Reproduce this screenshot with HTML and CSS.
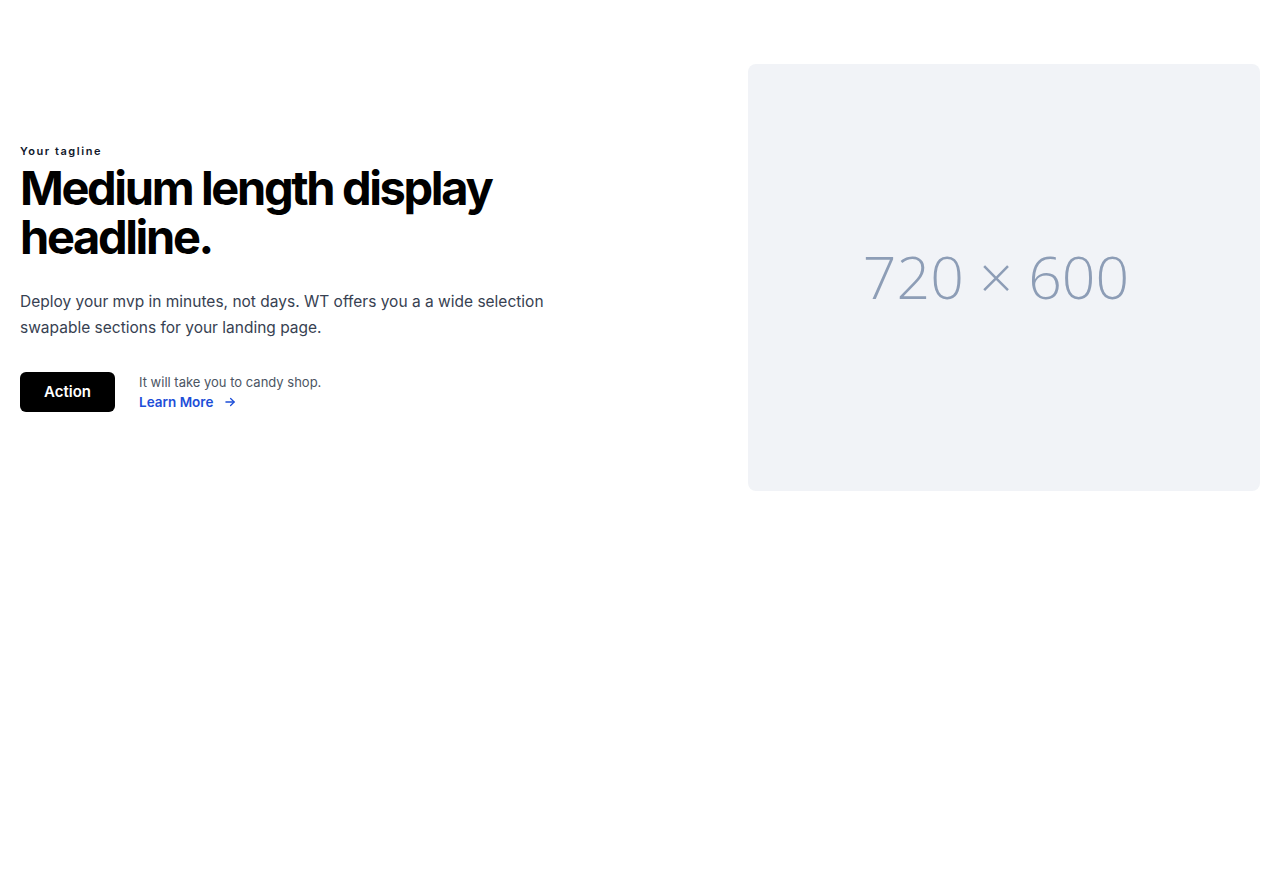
FILE: index.html
```html
<!DOCTYPE html>
<html lang="en">
<head>
<meta charset="utf-8">
<title>Hero</title>
<link rel="stylesheet" href="styles.css">
</head>
<body>
<section class="hero">
  <div class="copy">
    <p class="tagline">Your tagline</p>
    <h1 class="headline">Medium length display headline.</h1>
    <p class="lead">Deploy your mvp in minutes, not days. WT offers you a a wide selection swapable sections for your landing page.</p>
    <div class="actions">
      <a class="btn" href="#">Action</a>
      <div class="note">
        <span class="note-text">It will take you to candy shop.</span>
        <a class="learn" href="#">Learn More
          <svg class="arrow" width="14" height="14" viewBox="0 0 24 24" fill="none" stroke="currentColor" stroke-width="2.2" stroke-linecap="round" stroke-linejoin="round"><path d="M5 12h14"/><path d="M13 6l6 6-6 6"/></svg>
        </a>
      </div>
    </div>
  </div>
  <div class="media">
    <span class="media-label">720 × 600</span>
  </div>
</section>
</body>
</html>
```
FILE: styles.css
```css
* { box-sizing: border-box; }
html, body { margin: 0; padding: 0; background: #fff; }
body { font-family: "Inter", "Noto Sans", sans-serif; color: #111; }

.hero {
  display: grid;
  grid-template-columns: 1fr 512px;
  align-items: center;
  gap: 40px;
  padding: 64px 20px 0 20px;
}

.copy { display: flex; flex-direction: column; }

.tagline {
  margin: 0 0 5px 0;
  font-size: 11px;
  font-weight: 600;
  letter-spacing: 0.14em;
  color: #0f172a;
}

.headline {
  margin: 0 0 28px 0;
  font-size: 47px;
  line-height: 49px;
  font-weight: 700;
  letter-spacing: -0.05em;
  color: #000;
  max-width: 520px;
}

.lead {
  margin: 0 0 31px 0;
  font-size: 15.5px;
  line-height: 26px;
  color: #374151;
  max-width: 560px;
}

.actions { display: flex; align-items: center; gap: 24px; }

.btn {
  display: inline-flex;
  align-items: center;
  justify-content: center;
  width: 95px;
  height: 40px;
  background: #000;
  color: #fff;
  border-radius: 6px;
  font-size: 15px;
  font-weight: 600;
  text-decoration: none;
}

.note { display: flex; flex-direction: column; gap: 2px; }
.note-text { font-size: 13px; line-height: 18px; color: #4b5563; }
.learn {
  display: inline-flex;
  align-items: center;
  gap: 10px;
  font-size: 13.5px;
  line-height: 18px;
  font-weight: 600;
  color: #1d4ed8;
  text-decoration: none;
}
.arrow { display: block; }

.media {
  width: 512px;
  height: 427px;
  background: #f1f3f7;
  border-radius: 8px;
  display: flex;
  align-items: center;
  justify-content: center;
}
.media-label {
  font-family: "Open Sans", "Noto Sans", sans-serif;
  font-weight: 300;
  font-size: 59px;
  color: #8d9db6;
  margin: 0 16px 4px 0;
}
```
